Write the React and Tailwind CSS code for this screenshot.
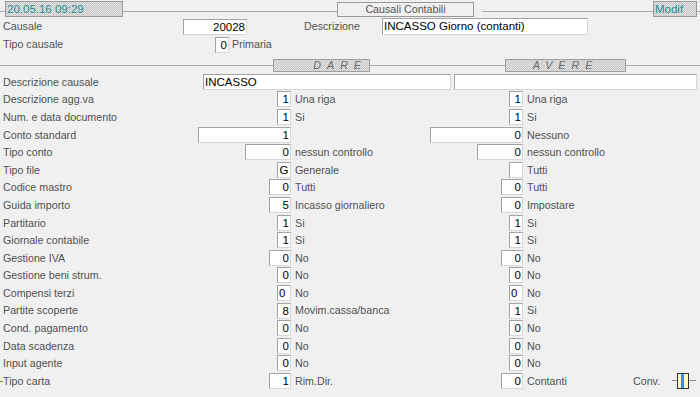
const hatch =
  "bg-[repeating-conic-gradient(#c8c8c8_0_25%,#e2e2e2_0_50%)] bg-[length:2px_2px]";

const rows = [
  { label: "Descrizione agg.va", l: ["1", "w-[14px]", "Una riga"], r: ["1", "w-[14px]", "Una riga"] },
  { label: "Num. e data documento", l: ["1", "w-[14px]", "Si"], r: ["1", "w-[14px]", "Si"] },
  { label: "Conto standard", l: ["1", "w-[93px]", ""], r: ["0", "w-[93px]", "Nessuno"] },
  { label: "Tipo conto", l: ["0", "w-[46px]", "nessun controllo"], r: ["0", "w-[46px]", "nessun controllo"] },
  { label: "Tipo file", l: ["G", "w-[14px]", "Generale", "center"], r: ["", "w-[14px]", "Tutti"] },
  { label: "Codice mastro", l: ["0", "w-[22px]", "Tutti"], r: ["0", "w-[22px]", "Tutti"] },
  { label: "Guida importo", l: ["5", "w-[22px]", "Incasso giornaliero"], r: ["0", "w-[22px]", "Impostare"] },
  { label: "Partitario", l: ["1", "w-[14px]", "Si"], r: ["1", "w-[14px]", "Si"] },
  { label: "Giornale contabile", l: ["1", "w-[14px]", "Si"], r: ["1", "w-[14px]", "Si"] },
  { label: "Gestione IVA", l: ["0", "w-[22px]", "No"], r: ["0", "w-[22px]", "No"] },
  { label: "Gestione beni strum.", l: ["0", "w-[14px]", "No"], r: ["0", "w-[14px]", "No"] },
  { label: "Compensi terzi", l: ["0", "w-[14px]", "No", "left"], r: ["0", "w-[14px]", "No", "left"] },
  { label: "Partite scoperte", l: ["8", "w-[14px]", "Movim.cassa/banca"], r: ["1", "w-[14px]", "Si"] },
  { label: "Cond. pagamento", l: ["0", "w-[14px]", "No"], r: ["0", "w-[14px]", "No"] },
  { label: "Data scadenza", l: ["0", "w-[14px]", "No"], r: ["0", "w-[14px]", "No"] },
  { label: "Input agente", l: ["0", "w-[14px]", "No"], r: ["0", "w-[14px]", "No"] },
  { label: "Tipo carta", l: ["1", "w-[22px]", "Rim.Dir."], r: ["0", "w-[22px]", "Contanti"], conv: true },
];

const Box = ({ value, width, align = "right" }) => (
  <div
    className={`${width} h-[16px] shrink-0 bg-white border border-t-[#a3a3a3] border-l-[#a3a3a3] border-r-[#d6d6d6] border-b-[#d6d6d6] text-black text-[11.5px] leading-[14px] px-[1px] ${
      align === "center" ? "text-center" : align === "left" ? "text-left" : "text-right"
    }`}
  >
    {value}
  </div>
);

const Field = ({ label, l, r, conv }) => (
  <div className="flex items-center h-[17.6px]">
    <div className="w-[291px] flex items-center justify-between pl-[3px]">
      <span className="relative">
        {conv && <span className="absolute left-[-3px] top-[8px] w-[3px] h-px bg-[#777]" />}
        {label}
      </span>
      <Box value={l[0]} width={l[1]} align={l[3]} />
    </div>
    <div className="w-[232px] flex items-center justify-between">
      <span className="pl-[4px]">{l[2]}</span>
      <Box value={r[0]} width={r[1]} align={r[3]} />
    </div>
    <div className="flex-1 flex items-center">
      <span className="pl-[4px] w-[110px]">{r[2]}</span>
      {conv && (
        <div className="flex items-center">
          <span className="w-[39px]">Conv.</span>
          <span className="w-[5px] h-px bg-[#8a8a8a]" />
          <div className="w-[12px] h-[16px] border border-[#333] bg-[#fff7c2] flex">
            <span className="ml-[3px] w-[3px] h-full bg-[#2f8ff0]" />
          </div>
          <span className="w-[7px] h-px bg-[#8a8a8a]" />
        </div>
      )}
    </div>
  </div>
);

const App = () => {
  return (
    <div className="w-[700px] h-[397px] overflow-hidden bg-[#f0f0f0] text-[#505050] text-[10.7px] font-['Liberation_Sans',Arial,sans-serif]">
      <div className="flex items-start h-[18px]">
        <div className="w-[5px] h-px bg-[#a8a8a8] mt-[11px]" />
        <div className={`w-[118px] h-[16px] mt-px ${hatch} border border-[#9a9a9a] text-[#1d8f8f] text-[11.5px] leading-[14px] pl-[1px]`}>
          20.05.16 09:29
        </div>
        <div className="flex-1 h-px bg-[#a8a8a8] mt-[11px]" />
        <div className="w-[137px] h-[15px] mt-[2px] border border-[#9a9a9a] text-[#555] text-center leading-[13px]">
          Causali Contabili
        </div>
        <div className="w-[8px]" />
        <div className="w-[171px] h-px bg-[#a8a8a8] mt-[11px]" />
        <div className={`w-[44px] h-[16px] mt-px ${hatch} border border-[#9a9a9a] text-[#1d8f8f] text-[11.5px] leading-[14px] pl-[1px]`}>
          Modif
        </div>
        <div className="w-[3px] h-px bg-[#a8a8a8] mt-[11px]" />
      </div>

      <div className="flex items-center h-[17px] pl-[3px]">
        <span className="w-[180px]">Causale</span>
        <Box value="20028" width="w-[64px]" />
        <span className="w-[135px] pl-[57px]">Descrizione</span>
        <div className="w-[206px] h-[17px] bg-white border border-t-[#a3a3a3] border-l-[#a3a3a3] border-r-[#d6d6d6] border-b-[#d6d6d6] text-black text-[11.5px] leading-[15px] pl-[1px]">
          INCASSO Giorno (contanti)
        </div>
      </div>
      <div className="flex items-center h-[17px] mt-px pl-[3px]">
        <span className="w-[212px]">Tipo causale</span>
        <Box value="0" width="w-[14px]" />
        <span className="pl-[3px]">Primaria</span>
      </div>

      <div className="flex items-center h-[14px] mt-[5px] text-[#6a6a6a] italic">
        <div className="w-[273px] h-px bg-[#a8a8a8]" />
        <div className={`w-[97px] h-[13px] ${hatch} border border-[#a0a0a0] leading-[11px] text-right pr-[2px] tracking-[6px]`}>
          DARE
        </div>
        <div className="w-[135px] h-px bg-[#a8a8a8]" />
        <div className={`w-[121px] h-[13px] ${hatch} border border-[#a0a0a0] leading-[11px] text-center tracking-[6px]`}>
          AVERE
        </div>
        <div className="flex-1 h-px bg-[#a8a8a8]" />
      </div>

      <div className="flex items-center h-[17.6px] mt-[1px]">
        <span className="w-[203px] pl-[3px]">Descrizione causale</span>
        <div className="w-[248px] h-[16px] bg-white border border-t-[#a3a3a3] border-l-[#a3a3a3] border-r-[#d6d6d6] border-b-[#d6d6d6] text-black text-[11.5px] leading-[14px] pl-[1px]">
          INCASSO
        </div>
        <div className="w-[3px]" />
        <div className="w-[243px] h-[16px] bg-white border border-t-[#a3a3a3] border-l-[#a3a3a3] border-r-[#d6d6d6] border-b-[#d6d6d6]" />
      </div>

      {rows.map((row) => (
        <Field key={row.label} {...row} />
      ))}
    </div>
  );
};

export default App;
